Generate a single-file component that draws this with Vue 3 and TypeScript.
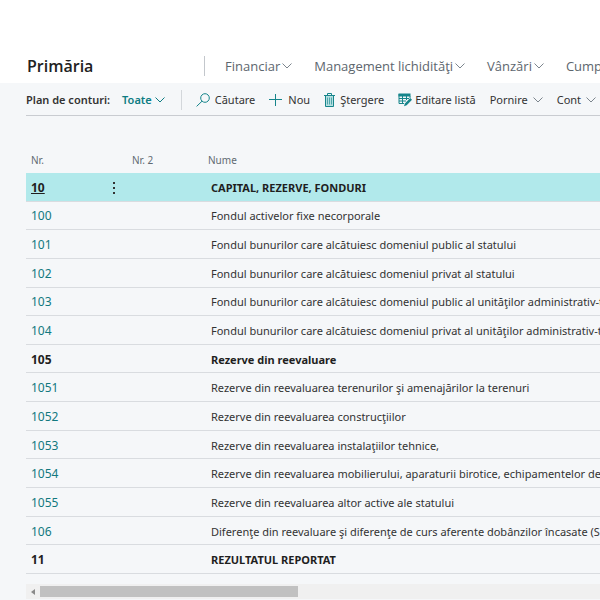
<script setup lang="ts">
import { ref } from 'vue'

interface Account {
  no: string
  name: string
  total?: boolean
}

const menus: string[] = ['Financiar', 'Management lichidităţi', 'Vânzări', 'Cumpărare']

const accounts: Account[] = [
  { no: '10', name: 'CAPITAL, REZERVE, FONDURI', total: true },
  { no: '100', name: 'Fondul activelor fixe necorporale' },
  { no: '101', name: 'Fondul bunurilor care alcătuiesc domeniul public al statului' },
  { no: '102', name: 'Fondul bunurilor care alcătuiesc domeniul privat al statului' },
  { no: '103', name: 'Fondul bunurilor care alcătuiesc domeniul public al unităţilor administrativ-teritoriale' },
  { no: '104', name: 'Fondul bunurilor care alcătuiesc domeniul privat al unităţilor administrativ-teritoriale' },
  { no: '105', name: 'Rezerve din reevaluare', total: true },
  { no: '1051', name: 'Rezerve din reevaluarea terenurilor şi amenajărilor la terenuri' },
  { no: '1052', name: 'Rezerve din reevaluarea construcţiilor' },
  { no: '1053', name: 'Rezerve din reevaluarea instalaţiilor tehnice,' },
  { no: '1054', name: 'Rezerve din reevaluarea mobilierului, aparaturii birotice, echipamentelor de' },
  { no: '1055', name: 'Rezerve din reevaluarea altor active ale statului' },
  { no: '106', name: 'Diferenţe din reevaluare şi diferenţe de curs aferente dobânzilor încasate (S' },
  { no: '11', name: 'REZULTATUL REPORTAT', total: true },
]

const selected = ref('10')
</script>

<template>
  <div class="page">
    <header class="top">
      <h1 class="company">Primăria</h1>
      <nav class="menus">
        <button v-for="menu in menus" :key="menu" class="menu" type="button">
          {{ menu }}
          <svg class="chevron" viewBox="0 0 10 6"><path d="M.5.5 5 5 9.500.5" /></svg>
        </button>
      </nav>
    </header>

    <main class="content">
      <div class="toolbar">
        <span class="caption">Plan de conturi:</span>
        <button class="tool view" type="button">
          Toate
          <svg class="chevron" viewBox="0 0 10 6"><path d="M.5.5 5 5 9.500.5" /></svg>
        </button>
        <span class="divider"></span>
        <button class="tool" type="button">
          <svg class="icon" viewBox="0 0 14 14"><circle cx="9" cy="5" r="4.300" /><path d="M6 8.200.6 13.400" /></svg>
          Căutare
        </button>
        <button class="tool" type="button">
          <svg class="icon" viewBox="0 0 14 14"><path d="M6.500 1v12M0 6.500h13" /></svg>
          Nou
        </button>
        <button class="tool" type="button">
          <svg class="icon small" viewBox="0 0 11 14">
            <path class="tint" d="M1.500 2.500h8v11h-8z" />
            <path d="M0 2.500h11M3.500 2.500v-2h4v2M1.500 2.500v11h8v-11" />
            <path class="slats" d="M3.500 4.500v7M5.500 4.500v7M7.500 4.500v7" />
          </svg>
          Ştergere
        </button>
        <button class="tool edit" type="button">
          <svg class="icon" viewBox="0 0 14 14">
            <path class="solid" d="M.5.500h12v3H.5z" />
            <path d="M1 1v9.500h5M1 5.500h10M1 8h7M4.500 3v7.500M8.500 3v4M12 3v2" />
            <path class="solid" d="m12.200 5 1.800 1.800-5.300 5.500-2.700.9.900-2.700z" />
          </svg>
          Editare listă
        </button>
        <button class="tool" type="button">
          Pornire
          <svg class="chevron" viewBox="0 0 10 6"><path d="M.5.5 5 5 9.500.5" /></svg>
        </button>
        <button class="tool" type="button">
          Cont
          <svg class="chevron" viewBox="0 0 10 6"><path d="M.5.5 5 5 9.500.5" /></svg>
        </button>
      </div>

      <table class="accounts">
        <colgroup><col class="c-no" /><col class="c-more" /><col class="c-no2" /><col /></colgroup>
        <thead>
          <tr>
            <th colspan="2">Nr.</th>
            <th>Nr. 2</th>
            <th>Nume</th>
          </tr>
        </thead>
        <tbody>
          <tr
            v-for="a in accounts"
            :key="a.no"
            :class="{ total: a.total, selected: a.no === selected }"
            @click="selected = a.no"
          >
            <td><a class="no" href="#" @click.prevent>{{ a.no }}</a></td>
            <td>
              <button v-if="a.no === selected" class="more" type="button" aria-label="Mai multe opţiuni">
                <svg viewBox="0 0 2 12"><path d="M0 0h2v2H0zM0 5h2v2H0zM0 10h2v2H0z" /></svg>
              </button>
            </td>
            <td></td>
            <td class="name">{{ a.name }}</td>
          </tr>
        </tbody>
      </table>

      <div class="scrollbar">
        <svg class="arrow" viewBox="0 0 4 6"><path d="M4 0v6L0 3z" /></svg>
        <span class="thumb"></span>
      </div>
    </main>
  </div>
</template>

<style>
body {
  background: #f5f7f9;
}
</style>

<style scoped>
.page {
  overflow: hidden;
  font: 12px/16px 'Noto Sans', 'Open Sans', sans-serif;
  color: #333;
}

.top {
  display: flex;
  align-items: center;
  height: 35px;
  padding: 48px 0 0 27px;
  background: #fff;
  font-family: 'Open Sans', 'Noto Sans', sans-serif;
}

.company {
  flex: none;
  width: 177px;
  margin: 0;
  font-size: 16px;
  font-weight: 600;
  line-height: 20px;
  color: #212121;
}

.menus {
  display: flex;
  flex: none;
  gap: 22px;
  padding-left: 20px;
  border-left: 1px solid #c3c7cc;
}

button {
  display: flex;
  flex: none;
  align-items: center;
  margin: 0;
  padding: 0;
  border: 0;
  background: none;
  font: inherit;
  color: inherit;
  white-space: nowrap;
  cursor: pointer;
}

.menu {
  gap: 2px;
  font-size: 13px;
  line-height: 20px;
  color: #5d666e;
}

svg {
  flex: none;
  fill: none;
}

.chevron {
  width: 10px;
  height: 6px;
  stroke: #7c858d;
}

.content {
  padding-left: 26px;
}

.toolbar {
  display: flex;
  align-items: center;
  height: 30px;
  padding-top: 2px;
  border-bottom: 1px solid #c9ccd1;
  font-size: 11px;
}

.caption {
  flex: none;
  font-weight: 600;
  color: #333;
}

.tool {
  gap: 5px;
  margin-right: 14px;
}

.view {
  margin: 0 16px 0 12px;
  gap: 3px;
  font-weight: 600;
  color: #0e7c83;
}

.view .chevron {
  stroke: #0e7c83;
}

.divider {
  flex: none;
  width: 1px;
  height: 20px;
  margin-right: 14px;
  background: #d3d7db;
}

.edit {
  gap: 3px;
}

.icon {
  width: 14px;
  height: 14px;
  stroke: #16858b;
}

.icon.small {
  width: 11px;
}

.solid {
  fill: #16858b;
  stroke: none;
}

.tint {
  fill: #b5dfe1;
  stroke: none;
}

.slats {
  stroke: #4fa6ab;
}

.accounts {
  width: 100%;
  height: 429px;
  margin-top: 29px;
  table-layout: fixed;
  border-collapse: separate;
  border-spacing: 0;
}

.c-no {
  width: 82px;
}

.c-more {
  width: 19px;
}

.c-no2 {
  width: 76px;
}

th {
  height: 26px;
  padding: 2px 0 0 5px;
  font-size: 10px;
  font-weight: 400;
  text-align: left;
  color: #616a72;
}

td {
  padding: 2px 0 0 5px;
  border-bottom: 1px solid #d9dce0;
  white-space: nowrap;
}

td.name {
  padding-left: 8px;
  font-size: 11px;
}

.no {
  color: #12797f;
  text-decoration: none;
}

.total,
.total .no {
  font-weight: 700;
  color: #1f1f1f;
}

.selected td {
  background: #b1e9eb;
}

.selected .no {
  text-decoration: underline;
}

.more svg {
  width: 2px;
  height: 12px;
  fill: #333;
}

.scrollbar {
  display: flex;
  align-items: center;
  height: 15px;
  margin-top: 10px;
  background: #f0f0f0;
}

.arrow {
  width: 4px;
  height: 6px;
  margin: 0 5px;
  fill: #8a8a8a;
}

.thumb {
  width: 45%;
  height: 11px;
  background: #c1c1c1;
}
</style>
